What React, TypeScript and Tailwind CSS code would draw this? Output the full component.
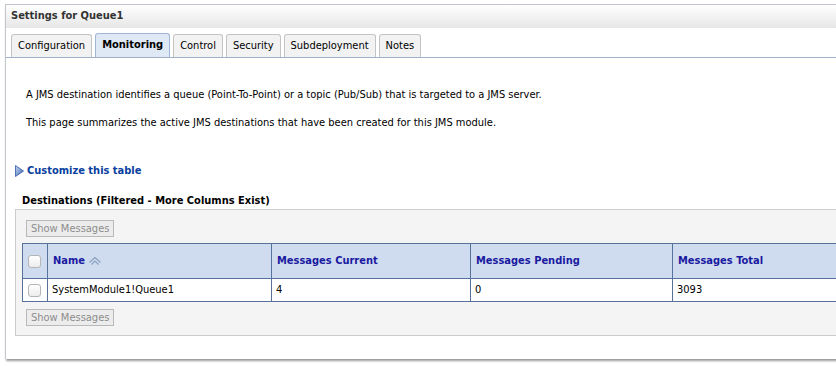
import React from 'react';

const font = { fontFamily: '"DejaVu Sans Condensed", "DejaVu Sans", Tahoma, sans-serif' };

const tabs = ['Configuration', 'Monitoring', 'Control', 'Security', 'Subdeployment', 'Notes'];

const columns = [
    { label: 'Name', width: 'w-[224px]', sort: true },
    { label: 'Messages Current', width: 'w-[199px]' },
    { label: 'Messages Pending', width: 'w-[202px]' },
    { label: 'Messages Total', width: 'w-[190px]' },
];

const row = ['SystemModule1!Queue1', '4', '0', '3093'];

function Checkbox() {
    return (
        <span className="block h-[13px] w-[13px] rounded-[3px] border border-[#b5b5b5] bg-gradient-to-b from-white to-[#ececec]" />
    );
}

function SortIcon() {
    return (
        <svg width="14" height="10" viewBox="0 0 14 10" className="ml-[3px]">
            <path d="M1.5 6.5 L7 1.5 L12.5 6.5" fill="none" stroke="#8aa0c0" strokeWidth="1.2" />
            <path d="M3.5 8.5 L7 5 L10.5 8.5" fill="none" stroke="#8aa0c0" strokeWidth="1.2" />
        </svg>
    );
}

function ArrowIcon() {
    return (
        <svg width="9" height="12" viewBox="0 0 9 12" className="mr-[3px]">
            <defs>
                <linearGradient id="arr" x1="0" y1="0" x2="1" y2="1">
                    <stop offset="0" stopColor="#c9d8f0" />
                    <stop offset="1" stopColor="#3b62b0" />
                </linearGradient>
            </defs>
            <path d="M0.5 0.5 L8.5 6 L0.5 11.5 Z" fill="url(#arr)" stroke="#2d55a8" strokeWidth="0.8" />
        </svg>
    );
}

function ShowButton() {
    return (
        <button className="h-[17px] border border-[#b9b9b9] bg-[#ececec] px-[4px] text-[11px] leading-none text-[#8d8d8d]">
            Show Messages
        </button>
    );
}

export default function App() {
    return (
        <div className="h-[382px] w-[836px] overflow-hidden bg-white text-[11px] text-black" style={font}>
            <div className="ml-[5px] mt-[4px] w-[840px] border-l border-t border-[#c2c6cc] shadow-[0_3px_2px_-1px_#9a9a9a]">
                <div className="flex h-[23px] items-center bg-gradient-to-b from-white to-[#e6e6e6] pl-[5px] text-[11px] font-bold text-[#333]">
                    Settings for Queue1
                </div>
                <div className="flex h-[30px] items-end gap-[3px] border-b border-[#9fb0c8] pl-[5px] pt-[6px]">
                    {tabs.map((t) => (
                        <div
                            key={t}
                            className={
                                t === 'Monitoring'
                                    ? 'flex h-[24px] items-center rounded-t-[3px] border border-b-0 border-[#9fb6d6] bg-[#dfe9f5] px-[6px] font-bold'
                                    : 'flex h-[23px] items-center rounded-t-[3px] border border-b-0 border-[#c4c4c4] bg-[#f2f2f2] px-[6px]'
                            }
                        >
                            {t}
                        </div>
                    ))}
                </div>
                <div className="flex flex-col pb-[23px]">
                    <p className="ml-[20px] mt-[30px] leading-[14px]">
                        A JMS destination identifies a queue (Point-To-Point) or a topic (Pub/Sub) that is targeted to a JMS server.
                    </p>
                    <p className="ml-[20px] mt-[14px] leading-[14px]">
                        This page summarizes the active JMS destinations that have been created for this JMS module.
                    </p>
                    <a className="ml-[9px] mt-[33px] flex items-center font-bold text-[#0b3fa0]">
                        <ArrowIcon />
                        Customize this table
                    </a>
                    <div className="ml-[16px] mt-[14px] font-bold leading-[14px]">
                        Destinations (Filtered - More Columns Exist)
                    </div>
                    <div className="ml-[9px] mt-[1px] flex flex-col border border-[#cccccc] bg-[#f4f4f4] pb-[8px] pt-[10px]">
                        <div className="pl-[10px]">
                            <ShowButton />
                        </div>
                        <table className="ml-[6px] mt-[6px] w-[840px] table-fixed border-collapse">
                            <colgroup>
                                <col className="w-[25px]" />
                                {columns.map((c) => (
                                    <col key={c.label} className={c.width} />
                                ))}
                            </colgroup>
                            <thead>
                                <tr className="h-[35px] bg-[#cfdcf0]">
                                    <th className="border border-[#56729a] pl-[5px]">
                                        <Checkbox />
                                    </th>
                                    {columns.map((c) => (
                                        <th
                                            key={c.label}
                                            className="border border-[#56729a] pl-[5px] text-left font-bold text-[#1a1aa0]"
                                        >
                                            <span className="flex items-center">
                                                {c.label}
                                                {c.sort && <SortIcon />}
                                            </span>
                                        </th>
                                    ))}
                                </tr>
                            </thead>
                            <tbody>
                                <tr className="h-[23px] bg-white">
                                    <td className="border border-[#56729a] pl-[5px]">
                                        <Checkbox />
                                    </td>
                                    {row.map((v, i) => (
                                        <td key={i} className="border border-[#56729a] pl-[4px]">
                                            {v}
                                        </td>
                                    ))}
                                </tr>
                            </tbody>
                        </table>
                        <div className="mt-[7px] pl-[10px]">
                            <ShowButton />
                        </div>
                    </div>
                </div>
            </div>
        </div>
    );
}
